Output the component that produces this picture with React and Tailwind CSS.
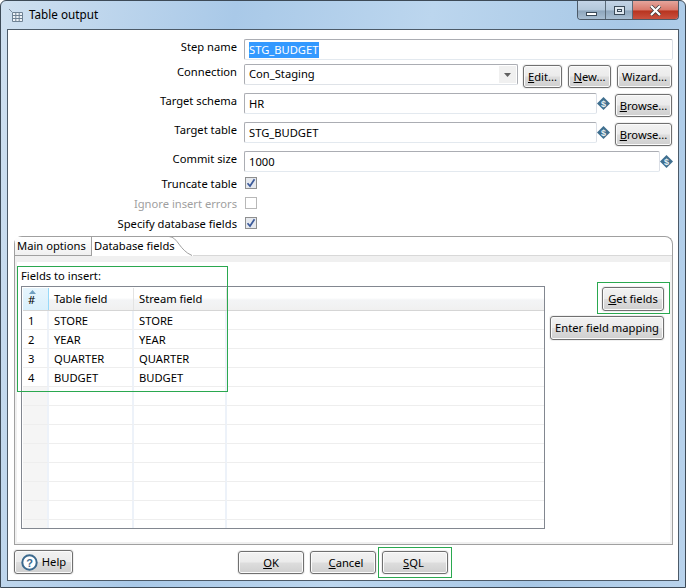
import React from "react";

const FONT = { fontFamily: '"Noto Sans", sans-serif' };

function Btn({ children, className = "" }) {
  return (
    <button className={`flex items-center justify-center rounded-[3px] border border-[#707070] bg-[linear-gradient(#f2f2f2_0%,#ebebeb_48%,#dddddd_52%,#cfcfcf_100%)] text-[11.2px] leading-none text-black shadow-[inset_0_0_0_1px_#fbfbfb,0_0_0_1px_#f0f0f0] ${className}`}>
      {children}
    </button>
  );
}

function VarIcon({ className = "" }) {
  return (
    <svg width="13" height="13" viewBox="0 0 13 13" className={`shrink-0 ${className}`}>
      <path d="M6.5 0 13 6.5 6.5 13 0 6.5Z" fill="#3f6f8f" />
      <text x="6.5" y="9.6" textAnchor="middle" fontSize="9" fontWeight="700" fill="#e8eef2" fontFamily="Liberation Sans, sans-serif">$</text>
    </svg>
  );
}

function Check({ checked, disabled }) {
  return (
    <span className={`flex h-[12px] w-[12px] items-center justify-center border ${disabled ? "border-[#b8b8b8] bg-white" : "border-[#8e8f8f] bg-[#e6e9ee]"}`}>
      {checked && (
        <svg width="10" height="10" viewBox="0 0 10 10">
          <path d="M1.5 5.2 4 8 8.5 1.2" fill="none" stroke="#3b5a9a" strokeWidth="1.7" />
        </svg>
      )}
    </span>
  );
}

function Label({ children, muted, shift = "" }) {
  return (
    <div className={`w-[229px] shrink-0 text-right text-[11.2px] leading-[16px] ${muted ? "text-[#a0a0a0]" : "text-black"} ${shift}`}>
      {children}
    </div>
  );
}

function Input({ value, className = "", selected }) {
  return (
    <div className={`flex h-[21px] items-center rounded-[2px] border border-[#abadb3] border-b-[#e3e9ef] border-r-[#dbdfe6] bg-white pl-[4px] pt-[1px] text-[11.2px] text-black ${className}`}>
      {selected ? <span className="bg-[#3399ff] pr-[1px] text-white">{value}</span> : value}
    </div>
  );
}

const ROWS = [
  ["1", "STORE"],
  ["2", "YEAR"],
  ["3", "QUARTER"],
  ["4", "BUDGET"],
  ...Array.from({ length: 11 }, () => ["", ""]),
];

function Grid() {
  return (
    <div className="h-[243px] overflow-hidden border border-[#828790] bg-white pl-[1px] pt-[1px]">
      <div className="flex h-[23px] border-b border-[#d5d5d5] bg-[linear-gradient(#ffffff_0%,#ffffff_45%,#f3f4f6_55%,#f0f0f0_100%)] text-[11.2px] leading-none">
        <div className="relative flex w-[26px] items-end border-r border-[#96d9f9] bg-[linear-gradient(#e6f5fd,#d9f0fc)] pb-[5px] pl-[5px]">
          <svg width="7" height="4" viewBox="0 0 7 4" className="absolute left-[6px] top-[2px]"><path d="M0 4 3.5 0 7 4Z" fill="#6f9fc0" /></svg>
          #
        </div>
        <div className="flex w-[85px] items-center border-r border-[#e3e3e3] pl-[5px]">Table field</div>
        <div className="flex w-[93px] items-center border-r border-[#e3e3e3] pl-[5px]">Stream field</div>
        <div className="flex-1" />
      </div>
      {ROWS.map(([n, v], i) => (
        <div key={i} className="flex h-[19px] text-[11.2px] leading-none">
          <div className={`flex w-[26px] items-center border-b border-r-2 border-[#edf2f9] border-b-[#eeeeee] pl-[5px] pt-[1px] ${n ? "bg-white" : "bg-[#f5f5f5]"}`}>{n}</div>
          <div className="flex w-[85px] items-center border-b border-r-2 border-[#edf2f9] border-b-[#eeeeee] pl-[5px] pt-[1px]">{v}</div>
          <div className="flex w-[93px] items-center border-b border-r-2 border-[#edf2f9] border-b-[#eeeeee] pl-[5px] pt-[1px]">{v}</div>
          <div className="flex-1 border-b border-[#eeeeee]" />
        </div>
      ))}
    </div>
  );
}

export default function App() {
  return (
    <div style={FONT} className="relative h-[588px] w-[686px] overflow-hidden rounded-t-[6px] border border-[#3d4a57] bg-[linear-gradient(100deg,#cfe0f0_0%,#a9c9e8_30%,#bcd6ee_55%,#a8c8e6_80%,#b9d3ec_100%)] px-[6px] pb-[6px]">
      {/* title bar */}
      <div className="flex h-[28px] items-center">
        <svg width="15" height="14" viewBox="0 0 15 14" className="ml-[2px] mt-[1px]">
          <path d="M0 0 3 3" stroke="#7f8fa0" />
          <path d="M3.5 3.5h10v9h-10zM3.5 6.5h10M3.5 9.5h10M6.8 3.5v9M10.2 3.5v9" fill="#eef3f8" stroke="#6f8294" />
        </svg>
        <span className="ml-[5px] text-[11.7px] text-black">Table output</span>
        <div className="ml-auto flex h-[19px] self-start overflow-hidden rounded-b-[4px] border border-t-0 border-[#4c5a68]">
          <div className="flex w-[28px] items-end justify-center border-r border-[#5a6a78] bg-[linear-gradient(#c3d4e6_0%,#b3c7da_50%,#8ea6bc_55%,#a8bed2_100%)] pb-[3px]">
            <span className="h-[4px] w-[11px] border border-[#3a4a58] bg-white" />
          </div>
          <div className="flex w-[27px] items-center justify-center border-r border-[#5a6a78] bg-[linear-gradient(#c3d4e6_0%,#b3c7da_50%,#8ea6bc_55%,#a8bed2_100%)]">
            <span className="flex h-[9px] w-[11px] items-center justify-center border border-[#3a4a58] bg-[#dfe8f0]"><span className="h-[3px] w-[5px] border border-[#3a4a58]" /></span>
          </div>
          <div className="flex w-[45px] items-center justify-center bg-[linear-gradient(#e5a59c_0%,#d8796b_50%,#b8341f_55%,#c9513f_100%)]">
            <svg width="13" height="11" viewBox="0 0 13 11"><path d="M2 1 11 10M11 1 2 10" stroke="#3a3a3a" strokeWidth="3.6" /><path d="M2 1 11 10M11 1 2 10" stroke="#ffffff" strokeWidth="2.2" /></svg>
          </div>
        </div>
      </div>

      {/* dialog body */}
      <div className="relative flex h-[552px] flex-col border border-[#4c5a68] bg-white pt-[9px] text-[11.2px]">
        <div className="flex h-[21px] gap-[7px]">
          <Label>Step name</Label>
          <Input value="STG_BUDGET" selected className="w-[429px] border-[#5d8db5] border-b-[#b5d3e6] border-r-[#b5d3e6]" />
        </div>

        <div className="mt-[4px] flex h-[24px] gap-[7px]">
          <Label>Connection</Label>
          <div className="flex w-[274px] items-start">
            <div className="flex h-[21px] w-full items-center justify-between rounded-[2px] border border-[#abadb3] border-b-[#dfe3e8] bg-white pl-[4px] pr-[1px]">
              Con_Staging
              <span className="flex h-[17px] w-[17px] items-center justify-center bg-[#f0f0f0]">
                <svg width="7" height="4" viewBox="0 0 7 4"><path d="M0 0H7L3.5 4Z" fill="#606060" /></svg>
              </span>
            </div>
          </div>
          <div className="ml-[-2px] flex gap-[6px] pt-[1px]">
            <Btn className="h-[23px] w-[39px]"><u>E</u>dit...</Btn>
            <Btn className="h-[23px] w-[43px]"><u>N</u>ew...</Btn>
            <Btn className="h-[23px] w-[55px]">Wizard...</Btn>
          </div>
        </div>

        {["HR", "STG_BUDGET"].map((v, i) => (
          <div key={i} className="mt-[5px] flex h-[24px] gap-[7px]">
            <Label>{i === 0 ? "Target schema" : "Target table"}</Label>
            <Input value={v} className="w-[353px]" />
            <VarIcon className="ml-[-7px] mt-[4px]" />
            <Btn className="ml-[-2px] mt-[1px] h-[23px] w-[57px]"><u>B</u>rowse...</Btn>
          </div>
        ))}

        <div className="mt-[5px] flex h-[21px] gap-[7px]">
          <Label>Commit size</Label>
          <Input value="1000" className="w-[416px]" />
          <VarIcon className="ml-[-7px] mt-[4px]" />
        </div>

        {[
          ["Truncate table", true, false, "mt-[5px]"],
          ["Ignore insert errors", false, true, "mt-[8px]"],
          ["Specify database fields", true, false, "mt-[8px]"],
        ].map(([text, checked, disabled, gap]) => (
          <div key={text} className={`flex h-[12px] items-center gap-[8px] ${gap}`}>
            <Label muted={disabled} shift="mt-[2px]">{text}</Label>
            <Check checked={checked} disabled={disabled} />
          </div>
        ))}

        {/* tab folder */}
        <div className="relative ml-[6px] mt-[7px] flex h-[309px] w-[659px] flex-col">
          <div className="relative flex h-[20px] shrink-0 rounded-t-[8px] border border-b-0 border-[#a0a0a0]">
            <div className="flex w-[77px] items-center whitespace-nowrap border-b border-r border-[#a0a0a0] bg-[linear-gradient(#ffffff,#f0f0f0)] pl-[2px]">Main options</div>
            <div className="flex w-[77px] items-center whitespace-nowrap pl-[2px]">Database fields</div>
            <svg width="24" height="20" viewBox="0 0 24 20" className="mt-[-1px] shrink-0">
              <path d="M0 0.5C9 1 10 14 23 19.5" fill="none" stroke="#a0a0a0" />
            </svg>
            <div className="flex-1 border-b border-[#d8d8d8]" />
          </div>
          <div className="flex flex-1 border border-t-0 border-[#a0a0a0] bg-[#f0f0f0] p-[2px] pt-[6px]">
            <div className="relative flex w-full bg-white px-[4px] pt-[4px]">
              <div className="w-[524px]">
                <div className="mb-[2px] h-[18px] leading-[20px]">Fields to insert:</div>
                <Grid />
              </div>
              <div className="ml-[5px] flex flex-col items-end pt-[21px]">
                <Btn className="h-[24px] w-[62px]"><u>G</u>et fields</Btn>
                <Btn className="mt-[5px] h-[24px] w-[114px]">Enter field mapping</Btn>
              </div>
            </div>
          </div>
        </div>

        {/* dialog footer */}
        <div className="relative ml-[6px] mt-[5px] flex h-[24px]">
          <Btn className="h-[24px] w-[59px] gap-[4px]">
            <svg width="17" height="17" viewBox="0 0 17 17">
              <circle cx="8.5" cy="8.5" r="7.2" fill="#fff" stroke="#3c6a8e" strokeWidth="2" />
              <text x="8.5" y="12.6" textAnchor="middle" fontSize="11" fontWeight="700" fill="#3c6a8e" fontFamily="Liberation Sans, sans-serif">?</text>
            </svg>
            Help
          </Btn>
          <div className="ml-[165px] flex gap-[6px] pt-[1px]">
            <Btn className="h-[23px] w-[66px]"><u>O</u>K</Btn>
            <Btn className="h-[23px] w-[66px] pl-[6px]"><u>C</u>ancel</Btn>
            <Btn className="h-[23px] w-[66px] pr-[3px]"><u>S</u>QL</Btn>
          </div>
        </div>
      </div>

      {/* highlight frames drawn over the dialog */}
      <div className="absolute left-[16px] top-[265px] z-10 h-[126px] w-[211px] shadow-[inset_0_0_0_1px_#2aa84f]" />
      <div className="absolute left-[596px] top-[281px] z-10 h-[32px] w-[73px] shadow-[inset_0_0_0_1px_#2aa84f]" />
      <div className="absolute left-[377px] top-[546px] z-10 h-[31px] w-[74px] shadow-[inset_0_0_0_1px_#2aa84f]" />
    </div>
  );
}
